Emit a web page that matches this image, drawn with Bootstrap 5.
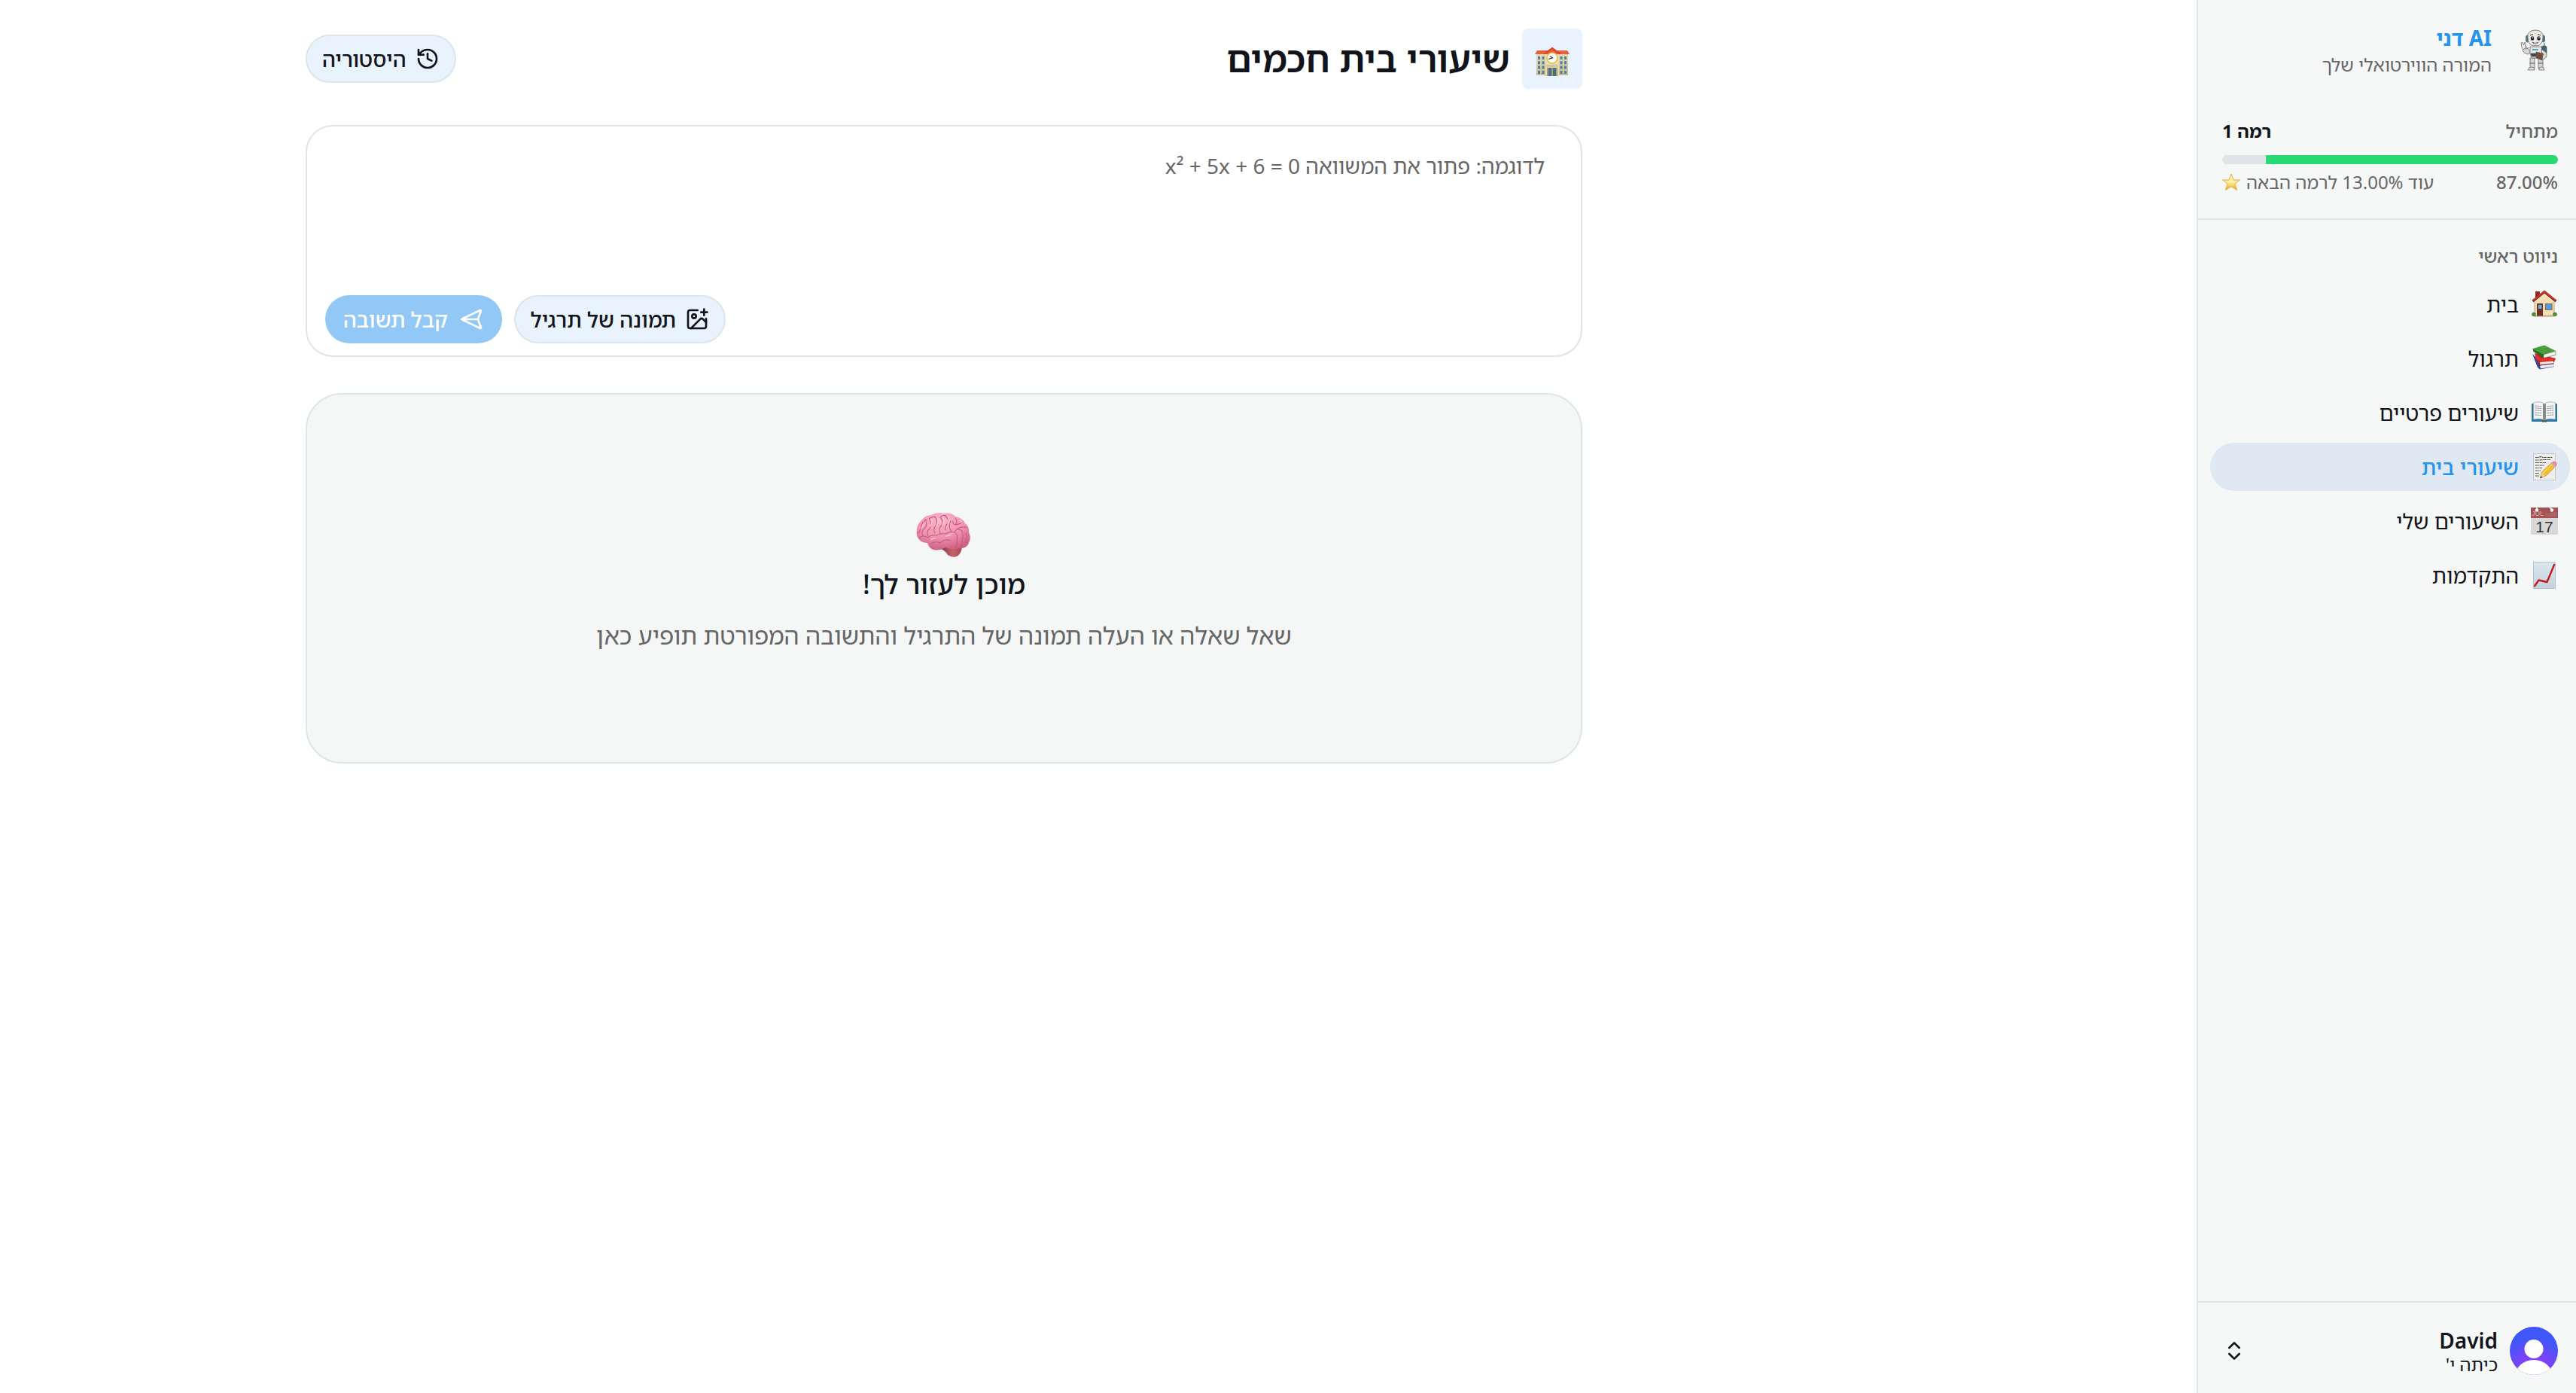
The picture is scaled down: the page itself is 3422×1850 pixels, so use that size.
<!DOCTYPE html>
<html lang="he" dir="rtl">
<head>
<meta charset="utf-8">
<meta name="viewport" content="width=device-width, initial-scale=1">
<title>שיעורי בית חכמים</title>
<link href="https://cdn.jsdelivr.net/npm/bootstrap@5.3.0/dist/css/bootstrap.min.css" rel="stylesheet">
<style>
:root{--line:#dce6ea;--ink:#11141a;--soft:#666;--blue:#2494ed;--panel:#f6f8f8;--tint:#e9f3fd}
body{font-family:"Noto Sans","Noto Sans Hebrew","Open Sans",sans-serif;font-size:28px;line-height:40px;color:var(--ink);background:#fff}
svg{display:block;flex:none;overflow:visible}
.stroke-icon{width:32px;height:32px;fill:none;stroke:currentColor;stroke-width:2;stroke-linecap:round;stroke-linejoin:round}
.side{width:504px;background:var(--panel);border-inline-end:2px solid var(--line)}
.brand{padding:30px 24px 0}
.brand-name{color:var(--blue)}
.t24{font-size:24px;line-height:32px}
.t28{font-size:28px;line-height:40px}
.soft{color:var(--soft)}
.medium{font-weight:500}
.level{padding:56px 24px 32px 32px;border-bottom:2px solid var(--line)}
.progress.xp{height:12px;border-radius:6px;background:#e0e4e9;margin:16px 0 8px}
.xp .progress-bar{background:#29da74}
.menu{padding:32px 8px 0 16px}
.menu h2{padding:0 16px;margin:0 0 16px}
.menu .nav{gap:8px}
.menu .nav-link{display:flex;align-items:center;gap:16px;height:64px;padding:0 16px;border-radius:32px;color:var(--ink);font-weight:400}
.menu .nav-link.active{background:#dfe8f3;color:var(--blue);font-weight:500}
.user{border:0;border-top:2px solid var(--line);background:none;padding:32px 24px 24px 32px;color:var(--ink);text-align:start}
.user .t28{line-height:36px}
.user .t24{line-height:28px}
.stage{padding:38px 410px 38px 0}
.page{width:100%;max-width:1696px}
.logo-box{width:80px;height:80px;border-radius:8px;background:var(--tint)}
.h-main{font-size:48px;line-height:64px;font-weight:600}
.pill{height:64px;border:2px solid var(--line);border-radius:32px;background:var(--tint);color:var(--ink);font-size:28px;line-height:36px;font-weight:500;padding:0 20px;gap:12px}
.pill-go{border:0;padding:0 24px;gap:16px}
.pill-go:disabled{background:#92c8f5;color:#fff;opacity:1}
.ask{border:2px solid var(--line);border-radius:36px;height:308px;padding:16px 24px}
.ask textarea{border:0;resize:none;box-shadow:none!important;background:none;font-size:28px;line-height:40px;padding:16px 24px}
.ask textarea::placeholder{color:var(--soft)}
.answer{border:2px solid var(--line);border-radius:48px;background:#f5f7f7;height:492px}
.t36{font-size:36px;line-height:48px;font-weight:500}
.t32{font-size:32px;line-height:56px}
.cal{font-family:"Liberation Sans",sans-serif}
</style>
<script src="https://cdn.jsdelivr.net/npm/bootstrap@5.3.0/dist/js/bootstrap.bundle.min.js"></script>
</head>
<body>
<div class="d-flex min-vh-100">
<aside class="side d-flex flex-column flex-shrink-0">
  <div class="brand d-flex align-items-start gap-4">
    <!-- robot mascot -->
    <svg width="64" height="72" viewBox="0 0 64 72" role="img" aria-label="דני">
      <g stroke="#55595c" stroke-width=".7" stroke-linejoin="round">
        <path d="M46 34V27" stroke="#3c6a72" stroke-width="1.2"/>
        <rect x="42" y="31" width="7" height="11" rx="2" fill="#3d6670"/>
        <path d="M26 33Q20 37 18 33L21 31L25 36L28 40L24 42Q18 41 17 36" fill="#dcd8d5"/>
        <path d="M16 33L15 27L17 26L18.500 30L20 26L21 27L21 33L18 36Z" fill="#efebe8"/>
        <path d="M27 47h6v14h-6zM38 47h6v14h-6z" fill="#d9d5d3"/>
        <path d="M26.500 54h7M37.500 54h7" stroke-width="1"/>
        <path d="M24 63q1-4 5-4t4 3v1zM39 63v-3q4-2 6 0l1 3z" fill="#e4e0de"/>
        <path d="M27 32h15l1 9-3 6H29l-2-6z" fill="#eae7e5"/>
        <path d="M28 41h13v4H29z" fill="#35474f"/>
        <path d="M43 36q7 3 6 8t-7 5l-2-3 5-3-3-4z" fill="#dad6d3"/>
        <path d="M35 39l9 2-1 9-8-3z" fill="#7a4a35"/>
        <rect x="21.500" y="17" width="4" height="9" rx="2" fill="#3f7c85"/><rect x="42.500" y="17" width="4" height="9" rx="2" fill="#3f7c85"/>
        <path d="M24 20Q23 10 34 10T44 20Q44 31 34 31T24 20Z" fill="#efeae6"/>
      </g>
      <path d="M30 36h8" stroke="#43b5c0" stroke-width="2"/>
      <ellipse cx="30" cy="21" rx="2.200" ry="2.800" fill="#223"/><ellipse cx="38.500" cy="21" rx="2.200" ry="2.800" fill="#223"/>
      <circle cx="30.500" cy="20" r=".8" fill="#fff"/><circle cx="39" cy="20" r=".8" fill="#fff"/>
      <path d="M27 17q2-2 4-1M37 16q2-1 4 1M30 26q4 4 8 0" fill="none" stroke="#333" stroke-width="1"/>
      <path d="M31 27q3 3 6 0z" fill="#fff" stroke="#333" stroke-width=".5"/>
    </svg>
    <div><div class="brand-name t28 fw-bold">AI דני</div><div class="t24 soft">המורה הווירטואלי שלך</div></div>
  </div>
  <div class="level t24">
    <div class="d-flex justify-content-between"><span class="soft medium">מתחיל</span><span class="fw-bold">רמה 1</span></div>
    <div class="progress xp" role="progressbar" aria-label="התקדמות לרמה הבאה" aria-valuenow="87" aria-valuemin="0" aria-valuemax="100"><div class="progress-bar" style="width:87%"></div></div>
    <div class="d-flex justify-content-between soft"><span class="medium">87.00%</span><span class="d-flex align-items-center gap-2">עוד 13.00% לרמה הבאה
      <svg width="24" height="24" viewBox="0 0 24 24"><defs><linearGradient id="st" x1="0" y1="0" x2="0" y2="1"><stop offset="0" stop-color="#fdf3b0"/><stop offset=".5" stop-color="#fdf0a0"/><stop offset="1" stop-color="#f3a41c"/></linearGradient></defs><path d="M12 1l3 8h8.500l-6.500 5 2.500 8.500L12 17.700 4.500 22.500 7 14 .5 9H9z" fill="url(#st)" stroke="#e5a13c" stroke-width=".9" stroke-linejoin="round"/></svg></span></div>
  </div>
  <nav class="menu flex-grow-1">
    <h2 class="t24 soft medium">ניווט ראשי</h2>
    <div class="nav flex-column">
      <a class="nav-link" href="#">
        <svg width="36" height="36" viewBox="0 0 36 36"><path d="M6 1h6v11H6z" fill="#8e2b25"/><path d="M5 13L18 3l13 10v20.500H5z" fill="#f6dfb5" stroke="#a98c68" stroke-width=".8"/><path d="M2.500 14L18 1.500 33.500 14" fill="none" stroke="#5f2020" stroke-width="3"/><path d="M3 13L18 1.300 33 13" fill="none" stroke="#d4322f" stroke-width="2"/><path d="M8 17h8v17H8z" fill="#6e3326"/><path d="M10 19h4.500v5H10z" fill="#67b4e6"/><path d="M19.500 17.500h8.500v8h-8.500z" fill="#4f9fe0" stroke="#8b6a4c" stroke-width="1.200"/><circle cx="4" cy="31.500" r="2.800" fill="#4c8a34"/><circle cx="32" cy="31.500" r="2.800" fill="#4c8a34"/><path d="M5 34h26" stroke="#a39578"/></svg>בית</a>
      <a class="nav-link" href="#">
        <svg width="36" height="36" viewBox="0 0 36 36"><path d="M2 12l8 8 21 5v4l-19 3.500L9 30z" fill="#2c479a"/><path d="M12 27.500l19-2v3l-18 3z" fill="#e8eaf0"/><path d="M5 11l28 7-3 7-18 2.500L7 19z" fill="#c9221f"/><path d="M12 23l18-1.500v2.700l-17.500 2z" fill="#f2eeee"/><path d="M6 12l8 6h16v3l-18 1.500-5-4z" fill="#e3302b"/><path d="M2.500 5L17 12.500v5L3.500 9z" fill="#24691f"/><path d="M17 12.500L33 8.500v5L17 17.500z" fill="#f3f3ee" stroke="#5b7b55" stroke-width=".7"/><path d="M2.500 5L18 .5 33 8 17 13z" fill="#4a9c3d"/></svg>תרגול</a>
      <a class="nav-link" href="#">
        <svg width="36" height="36" viewBox="0 0 36 36"><path d="M1 6h34v24H1z" fill="#2878a8"/><path d="M15 28h6v2.500h-6z" fill="#4c5b35"/><path d="M3.500 5q8-3 14.500 1 6.500-4 14.500-1v22q-9-2-14.500 1-5.500-3-14.500-1z" fill="#f3f3f3" stroke="#989ea3" stroke-width=".7"/><path d="M16 6l2 1 2-1v21l-2 1-2-1z" fill="#85898d"/><path d="M5.500 9l9 .5M5.500 12l9 .5M5.500 15l9 .5M5.500 18l9 .5M5.500 21l9 .5M21.500 9.500l9-.5M21.500 12.500l9-.5M21.500 15.500l9-.5M21.500 18.500l9-.5M21.500 21.500l9-.5" stroke="#8d9297" stroke-dasharray="2.500 .6"/></svg>שיעורים פרטיים</a>
      <a class="nav-link active" href="#" aria-current="page">
        <svg width="36" height="36" viewBox="0 0 36 36"><path d="M3.500.5h29v35h-29z" fill="#eeefed" stroke="#c6c8c8"/><path d="M6 5.500h5l2-1 3 1h13M6 9h6l3-.5h11M6 12.500h14M6 16h12M6 19.500h9M6 23h7M6 26.500h5M6 30h5" stroke="#444" stroke-width="1.200" fill="none" stroke-dasharray="3 .7 1.500 .6"/><path d="M12.500 33l2-8L28 12l5 5-13 13z" fill="#f6bd2e" stroke="#ad731a" stroke-width=".6"/><path d="M16 26.500L29 13.500" stroke="#fbd966" stroke-width="1.500"/><path d="M12.500 33l2-7.500 5 4.500z" fill="#ecc99d"/><path d="M12.300 33.200l.9-3 2 1.800z" fill="#222"/><path d="M26.500 13.500l2-2 5 5-2 2z" fill="#b3bac0"/><path d="M28 12l1.500-1.200q2-1 4 1t1 4L33 17z" fill="#ee8690"/></svg>שיעורי בית</a>
      <a class="nav-link" href="#">
        <svg class="cal" width="36" height="36" viewBox="0 0 36 36"><path d="M0 0h36v36H0z" fill="#d8d8d8"/><path d="M0 0h36v14H0z" fill="#a35353"/><circle cx="8" cy="3.500" r="2.200" fill="#fff"/><circle cx="28" cy="3.500" r="2.200" fill="#fff"/><path d="M8 0v3M25 0l3 3" stroke="#fff" stroke-width="1.200"/><path d="M20 8v4M22 7v5M24 8v4M26 7v5M28 7v5M30 6v6M32 6v6M34 6v6" stroke="#b77878" stroke-width=".8"/><text x="9" y="11" font-size="9" text-anchor="middle" fill="#dfb5b5" direction="ltr">JUL</text><text x="18" y="33" font-size="21" text-anchor="middle" fill="#2f2f2f" direction="ltr">17</text></svg>השיעורים שלי</a>
      <a class="nav-link" href="#">
        <svg width="36" height="36" viewBox="0 0 36 36"><defs><linearGradient id="ch" x1="0" y1="0" x2="0" y2="1"><stop offset="0" stop-color="#dde9f1"/><stop offset="1" stop-color="#c3d0da"/></linearGradient></defs><path d="M3.500.5h29v35h-29z" fill="url(#ch)" stroke="#b3c3cd"/><path d="M8 1v34M13 1v34M18 1v34M23 1v34M28 1v34M4 6h28M4 11h28M4 16h28M4 21h28M4 26h28M4 31h28" stroke="#cfdde7" stroke-width=".5"/><path d="M4.500 33l6-8.500 11 2.500L31.500 3" fill="none" stroke="#c01a20" stroke-width="2.400" stroke-linejoin="round"/></svg>התקדמות</a>
    </div>
  </nav>
  <button class="user d-flex align-items-center gap-3" type="button">
    <svg width="64" height="64" viewBox="0 0 64 64"><defs><radialGradient id="av" cx=".5" cy=".95" r=".75"><stop offset="0" stop-color="#a13bf5"/><stop offset=".45" stop-color="#7d42f8"/><stop offset="1" stop-color="#3f57fa"/></radialGradient><clipPath id="avc"><circle cx="32" cy="32" r="32"/></clipPath></defs><g clip-path="url(#avc)"><path d="M0 0h64v64H0z" fill="url(#av)"/><circle cx="32" cy="29.500" r="12.500" fill="#fff"/><ellipse cx="32" cy="66" rx="25" ry="22" fill="#fff"/></g></svg>
    <span class="flex-grow-1"><span class="d-block t28 fw-semibold">David</span><span class="d-block t24">כיתה י'</span></span>
    <svg class="stroke-icon" viewBox="0 0 24 24"><path d="m7 15 5 5 5-5M7 9l5-5 5 5"/></svg>
  </button>
</aside>
<main class="stage flex-grow-1">
 <div class="page mx-auto d-flex flex-column gap-5">
  <header class="d-flex align-items-center justify-content-between">
    <div class="d-flex align-items-center gap-3">
      <div class="logo-box d-flex align-items-center justify-content-center">
        <svg width="48" height="48" viewBox="0 0 48 48"><defs><linearGradient id="sc" x1="0" y1="0" x2="0" y2="1"><stop offset="0" stop-color="#e8dcb4"/><stop offset="1" stop-color="#c9bb8c"/></linearGradient></defs><path d="M3 17h42v29H3z" fill="url(#sc)"/><path d="M15 17l9-6 9 6v30H15z" fill="#e9dfbd"/><path d="M1 18l3-5h40l3 5z" fill="#e8603e"/><path d="M12 17.500L24 8.500l12 9-3 .500-9-5.500-9 5.500z" fill="#d9482f"/><circle cx="24" cy="23" r="7" fill="#fff" stroke="#e4bf3a" stroke-width="1.600"/><path d="M19 24.500l5.500-1.700-3.500-2" fill="none" stroke="#222" stroke-width="1.100"/><path d="M6.500 21v24M12 21v24M36 21v24M41.500 21v24" stroke="#4d7fa6" stroke-width="3" stroke-dasharray="4 2.300"/><path d="M16 31.500h16v4H16z" fill="#d5c79c"/><path d="M17 36h14v11H17z" fill="#45708f"/><path d="M18 36v11M24 36v11M30 36v11" stroke="#dcb545" stroke-width="1.300"/></svg>
      </div>
      <h1 class="h-main m-0">שיעורי בית חכמים</h1>
    </div>
    <button class="btn pill d-flex align-items-center" type="button"><svg class="stroke-icon" viewBox="0 0 24 24"><path d="M3 12a9 9 0 1 0 9-9 9.750 9.750 0 0 0-6.740 2.740L3 8"/><path d="M3 3v5h5M12 7v5l4 2"/></svg>היסטוריה</button>
  </header>
  <form class="ask d-flex flex-column">
    <textarea class="form-control flex-grow-1" aria-label="שאלה" placeholder="לדוגמה: פתור את המשוואה x² + 5x + 6 = 0"></textarea>
    <div class="d-flex justify-content-end gap-3">
      <button class="btn pill d-flex align-items-center" type="button"><svg class="stroke-icon" viewBox="0 0 24 24"><path d="M16 5h6M19 2v6M21 11.500V19a2 2 0 0 1-2 2H5a2 2 0 0 1-2-2V5a2 2 0 0 1 2-2h7.500"/><path d="m21 15-3.086-3.086a2 2 0 0 0-2.828 0L6 21"/><circle cx="9" cy="9" r="2"/></svg>תמונה של תרגיל</button>
      <button class="btn pill pill-go d-flex align-items-center" type="submit" disabled><svg class="stroke-icon" viewBox="0 0 24 24"><g transform="rotate(180 12 12)"><path d="M3.714 3.048a.498.498 0 0 0-.683.627l2.843 7.627a2 2 0 0 1 0 1.396l-2.842 7.627a.498.498 0 0 0 .682.627l18-8.500a.5.500 0 0 0 0-.904z"/><path d="M6 12h16"/></g></svg>קבל תשובה</button>
    </div>
  </form>
  <section class="answer d-flex flex-column align-items-center justify-content-center text-center">
    <!-- brain -->
    <svg width="90" height="88" viewBox="0 -6 90 88"><defs><radialGradient id="br" cx=".45" cy=".2" r=".8"><stop offset="0" stop-color="#fdb3c8"/><stop offset=".55" stop-color="#f294b2"/><stop offset="1" stop-color="#cf5f82"/></radialGradient><linearGradient id="bs" x1="0" y1="0" x2="1" y2="0"><stop offset="0" stop-color="#7c3038"/><stop offset=".6" stop-color="#c5626b"/><stop offset="1" stop-color="#a84b55"/></linearGradient></defs>
      <path d="M38 58Q46 60 50 67Q56 71 62 69Q68 66 69 56L60 52Z" fill="url(#bs)"/>
      <path d="M9 42Q7 28 15 21Q20 14 28 14Q36 9 45 12Q55 10 60 16Q69 17 73 25Q79 29 78 37Q82 45 77 53Q74 59 65 58Q55 61 47 57Q39 62 31 60Q25 58 23 51Q13 51 9 42Z" fill="url(#br)"/>
      <g fill="none" stroke="#c05f80" stroke-width="1.100" stroke-linecap="round"><path d="M10 38Q15 35 15 28Q17 22 22 20M17 42Q14 36 20 31Q24 25 20 20M24 42Q21 36 26 32Q30 26 25 19Q30 15 34 17M33 38Q30 33 34 28Q38 22 33 17M40 38Q37 32 42 27Q45 22 40 17Q44 13 48 15M47 34Q45 30 49 26Q53 20 47 16M54 22Q50 30 55 36M60 18Q64 23 60 27Q56 26 57 22M60 27Q67 26 70 23M62 33Q69 28 75 31M12 44Q18 40 24 44Q27 40 35 41Q41 38 47 39Q53 35 59 37Q61 31 67 34M28 52Q34 48 40 51Q46 45 54 48M59 37Q65 41 62 48Q63 54 60 58M68 34Q72 40 69 47Q71 52 67 57M74 38Q77 44 73 50"/></g>
      <g fill="none" stroke="#ffd0dd" stroke-width="1.500" stroke-linecap="round" opacity=".8"><path d="M18 26l-3 6M28 20q2 4-1 9M37 19q1 5-2 9M44 18q2 4-1 9M51 17q1 4-1 8M66 21l3 3M28 46l5-1M48 42l7-2"/></g></svg>
    <h2 class="t36 mb-3">מוכן לעזור לך!</h2>
    <p class="t32 soft m-0">שאל שאלה או העלה תמונה של התרגיל והתשובה המפורטת תופיע כאן</p>
  </section>
 </div>
</main>
</div>
</body>
</html>
